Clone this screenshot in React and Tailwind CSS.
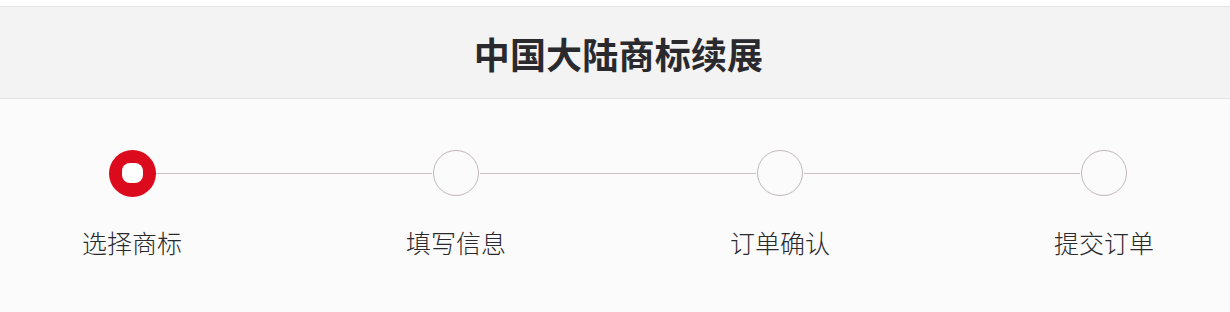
import React from "react";

const steps = ["选择商标", "填写信息", "订单确认", "提交订单"];

function Dot({ active }) {
  if (active) {
    return (
      <div className="w-12 h-12 flex items-center justify-center">
        <div className="w-[47px] h-[47px] rounded-full bg-[#db0a1c] flex items-center justify-center">
          <div className="w-[21px] h-[20px] rounded-[8px] bg-white" />
        </div>
      </div>
    );
  }
  return (
    <div className="w-12 h-12 flex items-center justify-center">
      <div className="w-[46px] h-[46px] rounded-full border-[1.5px] border-[#bfb6bb] bg-[#fcfbfc]" />
    </div>
  );
}

export default function App() {
  return (
    <div
      className="w-[1230px] h-[312px] bg-white pt-[6px] overflow-hidden"
      style={{ fontFamily: '"Noto Sans CJK SC", "Noto Sans", sans-serif' }}
    >
      {/* Header */}
      <div className="h-[93px] border-y border-[#e3e2e4] bg-[#f3f3f4] flex items-center justify-center pl-[7px]">
        <h1 className="text-[36px] leading-none font-bold text-[#2a2a2e] tracking-[0.2px]">
          中国大陆商标续展
        </h1>
      </div>

      {/* Steps */}
      <div className="h-[213px] bg-[#fbfbfc]">
        <div className="flex items-center pl-[108px] pr-[102px] pt-[50px]">
          {steps.map((s, i) => (
            <React.Fragment key={s}>
              <Dot active={i === 0} />
              {i < steps.length - 1 && <div className="flex-1 h-px bg-[#c8c0c4]" />}
            </React.Fragment>
          ))}
        </div>
        <div className="flex justify-between pl-[72px] pr-[66px] mt-[30px]">
          {steps.map((s) => (
            <div key={s} className="w-[120px] text-center text-[25px] leading-[30px] font-light text-[#2a2a2e]">
              {s}
            </div>
          ))}
        </div>
      </div>
    </div>
  );
}
